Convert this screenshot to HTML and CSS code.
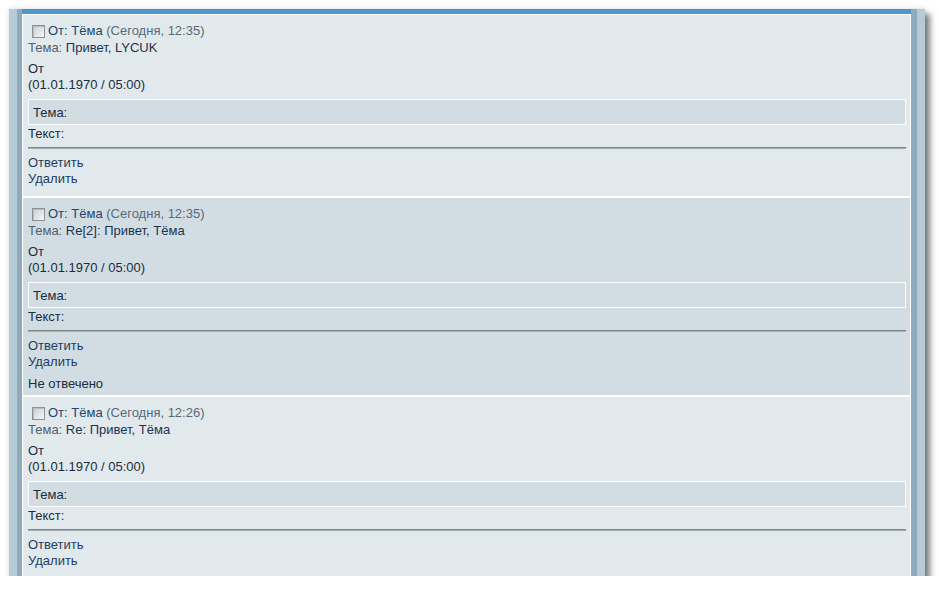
FILE: index.html
```html
<!DOCTYPE html>
<html>
    <head>
        <title>Личные сообщения</title>
        <link rel="stylesheet" href="styles.css">
    </head>
    <body>
        <div class="window">
            <div class="frame">
                <div class="topbar"></div>

                <div class="msg">
                    <div class="head">
                        <input type="checkbox" class="check"/>
                        <a class="author">От: Тёма</a>&nbsp;<span class="when">(Сегодня, 12:35)</span>
                    </div>
                    <div class="subject"><span class="label">Тема:</span> Привет, LYCUK</div>
                    <div class="from">От<br>(01.01.1970 / 05:00)</div>
                    <div class="field">Тема:</div>
                    <div class="body-text">Текст:</div>
                    <div class="rule"></div>
                    <div class="actions">
                        <a class="link">Ответить</a>
                        <a class="link">Удалить</a>
                    </div>
                </div>

                <div class="msg alt">
                    <div class="head">
                        <input type="checkbox" class="check"/>
                        <a class="author">От: Тёма</a>&nbsp;<span class="when">(Сегодня, 12:35)</span>
                    </div>
                    <div class="subject"><span class="label">Тема:</span> Re[2]: Привет, Тёма</div>
                    <div class="from">От<br>(01.01.1970 / 05:00)</div>
                    <div class="field">Тема:</div>
                    <div class="body-text">Текст:</div>
                    <div class="rule"></div>
                    <div class="actions">
                        <a class="link">Ответить</a>
                        <a class="link">Удалить</a>
                    </div>
                    <div class="status">Не отвечено</div>
                </div>

                <div class="msg">
                    <div class="head">
                        <input type="checkbox" class="check"/>
                        <a class="author">От: Тёма</a>&nbsp;<span class="when">(Сегодня, 12:26)</span>
                    </div>
                    <div class="subject"><span class="label">Тема:</span> Re: Привет, Тёма</div>
                    <div class="from">От<br>(01.01.1970 / 05:00)</div>
                    <div class="field">Тема:</div>
                    <div class="body-text">Текст:</div>
                    <div class="rule"></div>
                    <div class="actions">
                        <a class="link">Ответить</a>
                        <a class="link">Удалить</a>
                    </div>
                </div>
            </div>
        </div>
    </body>
</html>
```

FILE: styles.css
```css
body {
    margin: 0;
    background-color: #ffffff;
    font-family: "Liberation Sans", Arial, sans-serif;
    font-size: 13px;
    line-height: 16px;
    color: #1b2c3c;
}
.window {
    margin: 9px 0 0 9px;
    width: 900px;
    height: 567px;
    border-left: 8px solid #b7cbd5;
    border-right: 8px solid #b7cbd5;
    box-shadow: 5px 5px 6px rgba(0, 0, 0, 0.5), 0 0 5px rgba(0, 0, 0, 0.12);
}
.frame {
    height: 567px;
    overflow: hidden;
    border-left: 5px solid #8eabbd;
    border-right: 6px solid #8eabbd;
    background-color: #e1e9ed;
}
.topbar {
    height: 5px;
    background-color: #4c98c6;
}
.msg {
    border: 1px solid #ffffff;
    background-color: #e1e9ed;
    padding: 0 4px 3px 5px;
}
.msg.alt {
    background-color: #d2dde3;
}
.head {
    height: 18px;
    padding-top: 7px;
    display: flex;
    align-items: center;
}
.check {
    appearance: none;
    -webkit-appearance: none;
    width: 13px;
    height: 13px;
    margin: 0 3px 0 4px;
    border: 1px solid #8a9298;
    background: linear-gradient(135deg, #c9ced2, #f6f7f7);
    box-shadow: inset 1px 1px 0 #b7bcc0;
}
.author {
    color: #23466a;
}
.when {
    color: #58697a;
}
.subject {
    color: #1c3350;
}
.label {
    color: #52606c;
}
.from {
    margin-top: 5px;
}
.field {
    margin-top: 6px;
    height: 24px;
    line-height: 25px;
    padding-left: 4px;
    border: 1px solid #ffffff;
    background-color: #d2dde3;
}
.body-text {
    margin-top: 1px;
}
.rule {
    margin-top: 5px;
    height: 1px;
    border-top: 1px solid #80878c;
    background-color: #a3adb3;
}
.actions {
    margin-top: 6px;
    margin-bottom: 6px;
}
.link {
    display: block;
    color: #1e3d5e;
    cursor: pointer;
}
.status {
    color: #1b2c3c;
}
```
